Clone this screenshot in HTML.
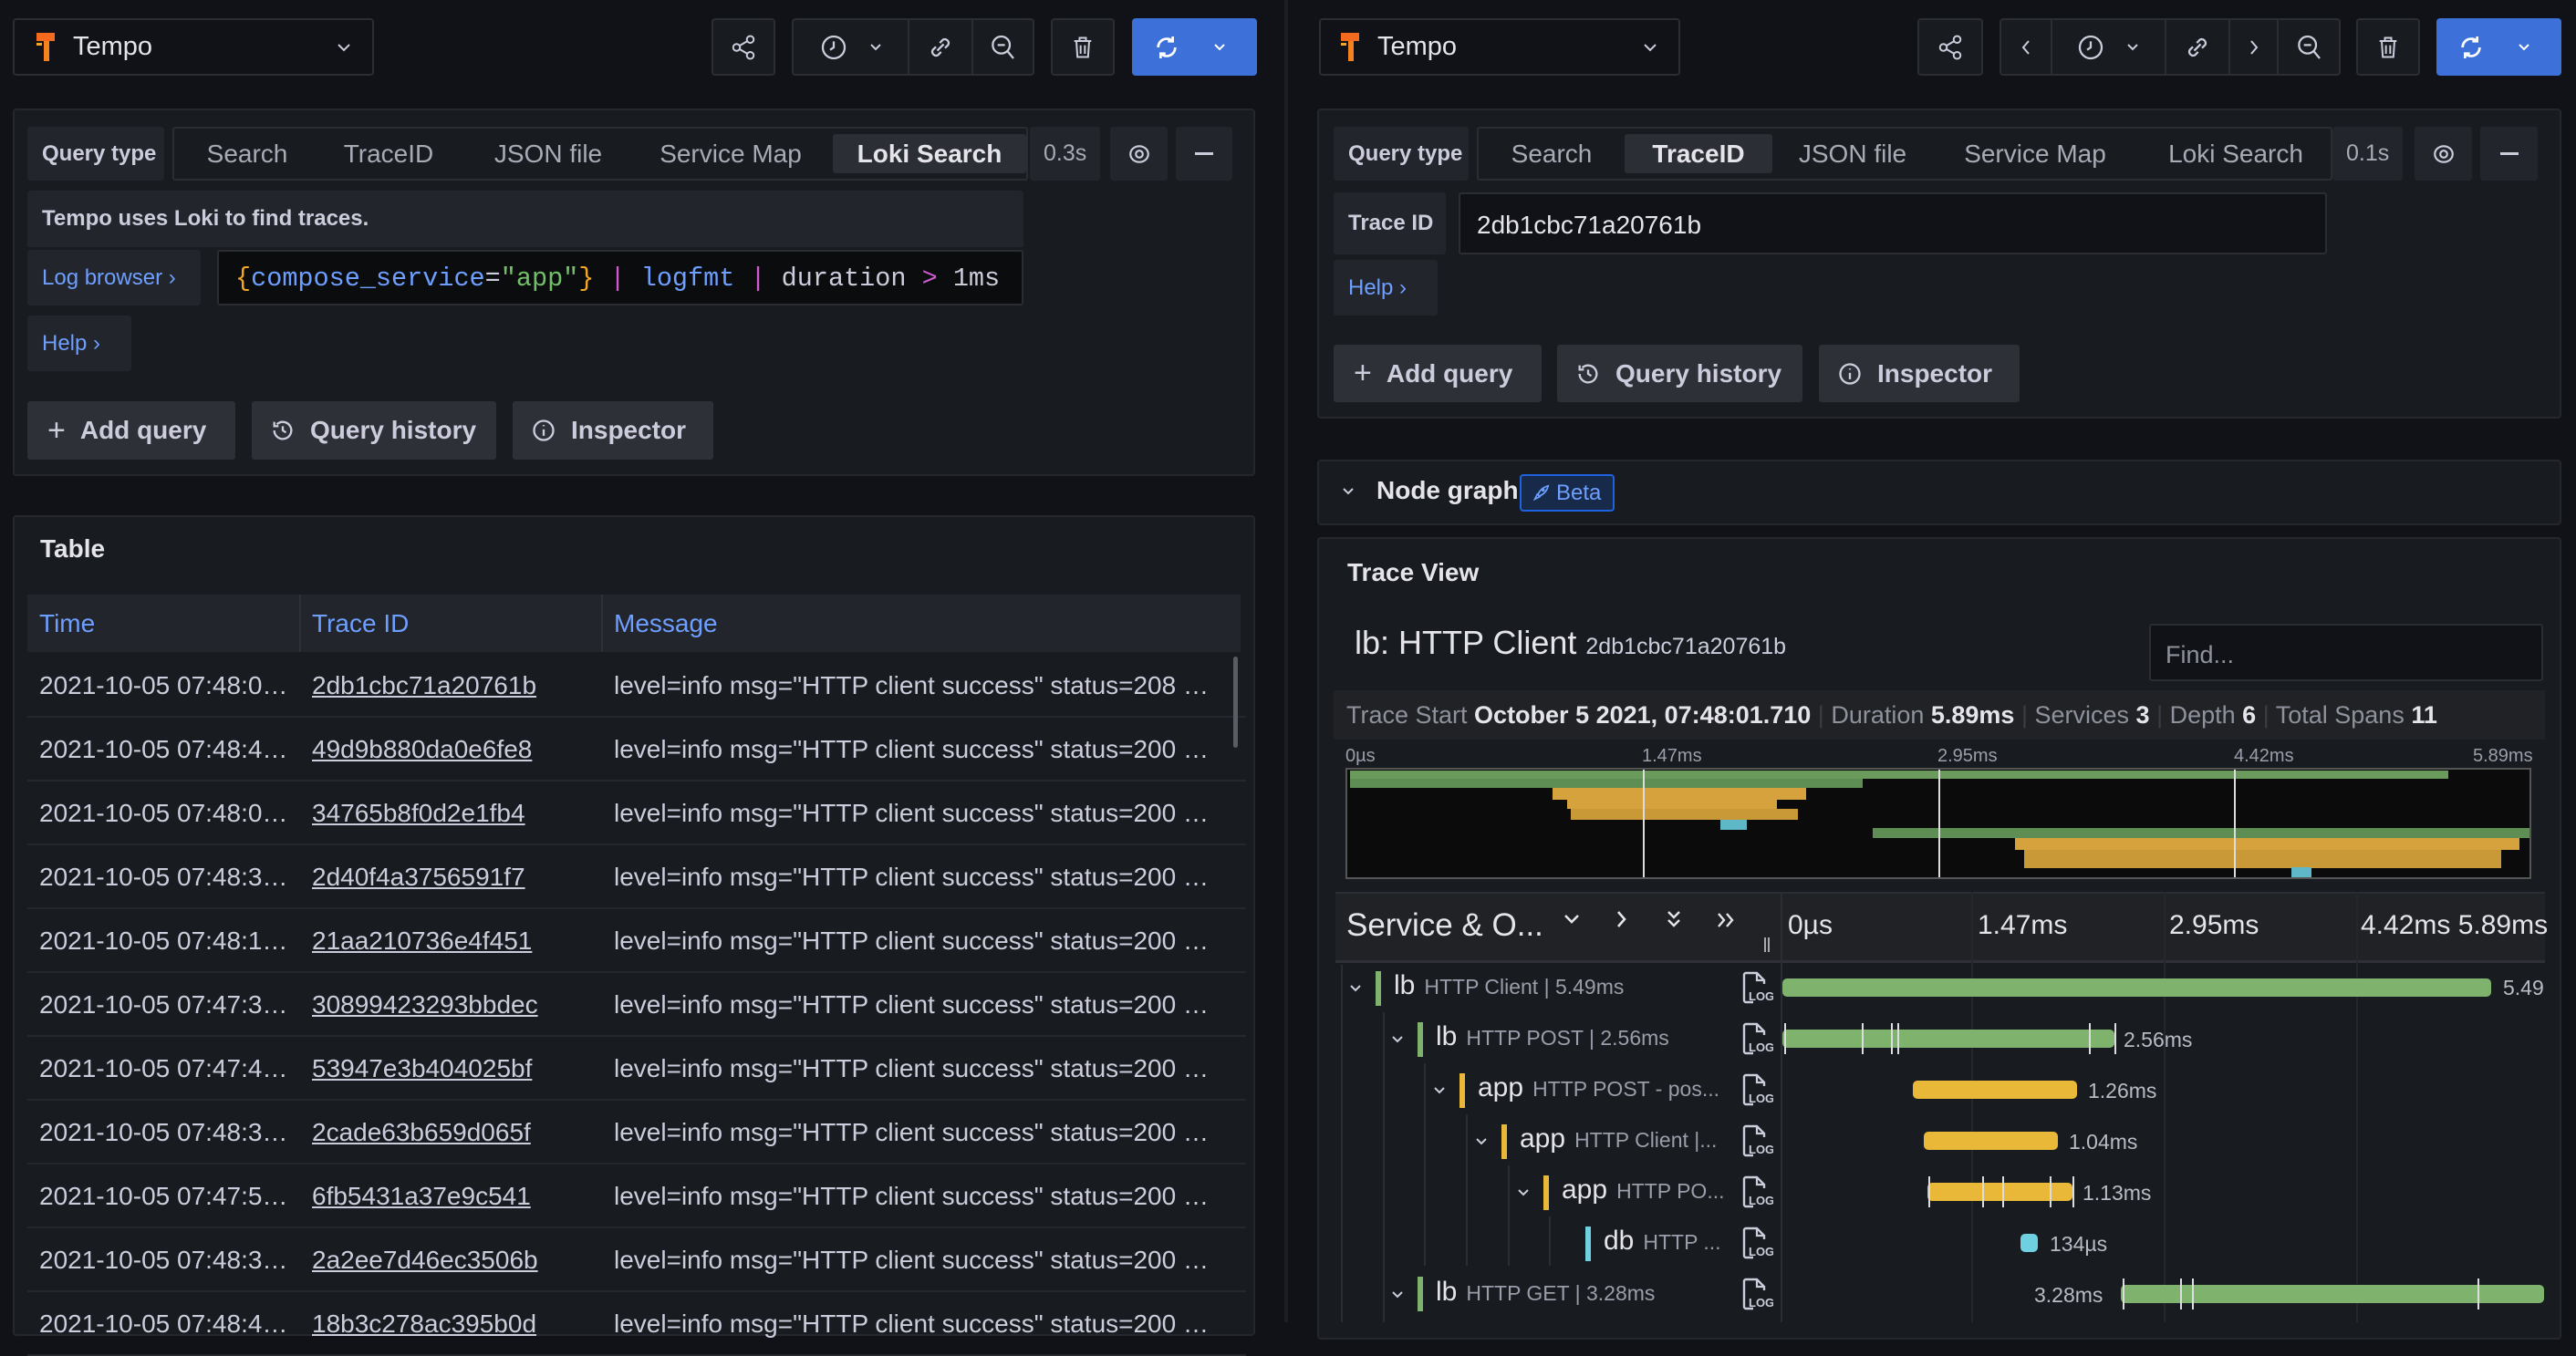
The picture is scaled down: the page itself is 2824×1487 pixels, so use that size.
<!DOCTYPE html>
<html><head><meta charset="utf-8"><style>
*{box-sizing:border-box;margin:0;padding:0}
body{width:2824px;height:1450px;background:#111217;font-family:"Liberation Sans",sans-serif;color:#ccccdc;position:relative;overflow:hidden}
.a{position:absolute}
.panel{position:absolute;background:#181b1f;border:2px solid #24272d;border-radius:4px}
.btn{position:absolute;background:#181b1f;border:2px solid #2a2d33;border-radius:4px;display:flex;align-items:center;justify-content:center}
.g{position:absolute;background:#22252b;border-radius:3px;display:flex;align-items:center;padding-left:16px;font-weight:bold;font-size:24px;color:#ccccdc}
.gb{position:absolute;background:#2d3036;border-radius:3px;display:flex;align-items:center;font-size:28px;font-weight:bold;color:#ccccdc}
.tab{position:absolute;font-size:28px;color:#a8abb6;top:0;height:100%;display:flex;align-items:center;justify-content:center;white-space:nowrap}
.act{background:#2b2e34;color:#e4e4ea;border-radius:3px}
svg{display:block}
.row{position:absolute;left:16px;width:1336px;height:70px;border-bottom:2px solid #24272d;font-size:28px;color:#ccccdc}
.row span{position:absolute;top:19px;white-space:nowrap;overflow:hidden;text-overflow:ellipsis}
.c1{left:13px;width:290px}.c2{left:312px;text-decoration:underline;width:300px}.c3{left:643px;width:680px}
.sv{position:absolute;font-size:30px;color:#e4e4ea;white-space:nowrap}
.op{font-size:23px;color:#9a9eaa;margin-left:10px}
.bar{position:absolute;height:20px;border-radius:5px}
.bl{position:absolute;font-size:23px;color:#b8bcc6}
.log{position:absolute;left:1908px}
</style></head><body>

<div class="a" style="left:1408px;top:0;width:4px;height:1450px;background:#1c1e23"></div>

<!-- LEFT TOP BAR -->
<div class="btn" style="left:14px;top:20px;width:396px;height:63px;justify-content:flex-start;padding-left:22px;background:#111217">
<svg width="26" height="36" viewBox="0 0 26 36"><rect x="2" y="2" width="20" height="9" fill="#f46b20"/><rect x="10" y="11" width="6" height="22" fill="#f5821f"/><rect x="2" y="13" width="6" height="3" fill="#f5a623"/></svg>
<span style="font-size:29px;margin-left:16px;color:#e4e4ea">Tempo</span>
<svg style="position:absolute;right:22px" width="18" height="12" viewBox="0 0 18 12"><path d="M3 3l6 6 6-6" stroke="#ccccdc" stroke-width="2" fill="none"/></svg></div>

<div class="btn" style="left:780px;top:20px;width:70px;height:63px"><svg width="30" height="30" viewBox="0 0 24 24" fill="none" stroke="#ccccdc" stroke-width="1.6"><circle cx="18" cy="5" r="3"/><circle cx="6" cy="12" r="3"/><circle cx="18" cy="19" r="3"/><path d="M8.6 10.5l6.8-4M8.6 13.5l6.8 4"/></svg></div>
<div class="btn" style="left:868px;top:20px;width:266px;height:63px;justify-content:flex-start">
<div style="width:126px;display:flex;align-items:center;justify-content:center;gap:22px"><svg width="32" height="32" viewBox="0 0 24 24" fill="none" stroke="#ccccdc" stroke-width="1.7"><circle cx="12" cy="12" r="9"/><path d="M12 7v5l-3 2"/></svg><svg width="16" height="10" viewBox="0 0 16 10"><path d="M3 2l5 5 5-5" stroke="#ccccdc" stroke-width="2" fill="none"/></svg></div>
<div style="width:70px;height:100%;border-left:2px solid #2a2d33;display:flex;align-items:center;justify-content:center"><svg width="34" height="34" viewBox="0 0 24 24" fill="none" stroke="#ccccdc" stroke-width="1.6"><path d="M9.5 14.5l5-5M8.5 11.5l-2.5 2.5a3 3 0 004 4l2.5-2.5M15.5 12.5l2.5-2.5a3 3 0 00-4-4l-2.5 2.5"/></svg></div>
<div style="width:68px;height:100%;border-left:2px solid #2a2d33;display:flex;align-items:center;justify-content:center"><svg width="32" height="32" viewBox="0 0 24 24" fill="none" stroke="#ccccdc" stroke-width="1.7"><circle cx="11" cy="10" r="7"/><path d="M8 10h6M16 15l5 6"/></svg></div></div>
<div class="btn" style="left:1152px;top:20px;width:70px;height:63px"><svg width="28" height="30" viewBox="0 0 24 24" fill="none" stroke="#ccccdc" stroke-width="1.7"><path d="M4 6h16M9 6V3h6v3M6 6l1 15h10l1-15M10 10v8M14 10v8"/></svg></div>
<div class="a" style="left:1241px;top:20px;width:137px;height:63px;background:#3d71d9;border-radius:4px;display:flex;align-items:center"><svg style="margin-left:22px" width="32" height="32" viewBox="0 0 24 24" fill="none" stroke="#fff" stroke-width="2"><path d="M19 12a7 7 0 01-12 5M5 12a7 7 0 0112-5M17 3v4h-4M7 21v-4h4"/></svg><svg style="margin-left:34px" width="16" height="10" viewBox="0 0 16 10"><path d="M3 2l5 5 5-5" stroke="#fff" stroke-width="2" fill="none"/></svg></div>

<!-- LEFT QUERY PANEL -->
<div class="panel" style="left:14px;top:119px;width:1362px;height:403px"></div>
<div class="g" style="left:30px;top:139px;width:150px;height:59px">Query type</div>
<div class="a" style="left:189px;top:139px;width:938px;height:59px;border:2px solid #2a2d33;border-radius:3px">
<div class="tab" style="left:30px;width:100px">Search</div>
<div class="tab" style="left:185px;width:100px">TraceID</div>
<div class="tab" style="left:350px;width:120px">JSON file</div>
<div class="tab" style="left:525px;width:170px">Service Map</div>
<div class="tab act" style="left:722px;width:212px;top:6px;height:43px;font-weight:bold">Loki Search</div></div>
<div class="g" style="left:1129px;top:139px;width:77px;height:59px;font-weight:normal;color:#a8abb6;font-size:25px;padding-left:15px">0.3s</div>
<div class="g" style="left:1217px;top:139px;width:63px;height:59px;padding:0;justify-content:center"><svg width="26" height="26" viewBox="0 0 24 24" fill="none" stroke="#ccccdc" stroke-width="2"><ellipse cx="12" cy="12" rx="9" ry="8"/><circle cx="12" cy="12" r="3.5"/></svg></div>
<div class="g" style="left:1289px;top:139px;width:62px;height:59px;padding:0;justify-content:center"><div style="width:20px;height:3px;background:#ccccdc"></div></div>
<div class="g" style="left:30px;top:209px;width:1092px;height:62px;font-size:24px;border-radius:4px 4px 0 0">Tempo uses Loki to find traces.</div>
<div class="g" style="left:30px;top:274px;width:190px;height:61px;color:#6e9fff;font-weight:normal;font-size:24px">Log browser ›</div>
<div class="a" style="left:238px;top:274px;width:884px;height:61px;background:#0b0c0e;border:2px solid #2a2d33;border-radius:3px;font-family:'Liberation Mono',monospace;font-size:28.5px;padding:13px 18px;white-space:pre"><span style="color:#f5a623">{</span><span style="color:#6e9fff">compose_service</span><span style="color:#ccccdc">=</span><span style="color:#73bf69">"app"</span><span style="color:#f5a623">}</span> <span style="color:#d05bd0">|</span> <span style="color:#6e9fff">logfmt</span> <span style="color:#d05bd0">|</span> <span style="color:#ccccdc">duration</span> <span style="color:#d05bd0">&gt;</span> <span style="color:#ccccdc">1ms</span></div>
<div class="g" style="left:30px;top:346px;width:114px;height:61px;color:#6e9fff;font-weight:normal">Help ›</div>
<div class="gb" style="left:30px;top:440px;width:228px;height:64px;padding-left:22px"><span style="font-weight:normal;font-size:34px;margin-right:16px">+</span>Add query</div>
<div class="gb" style="left:276px;top:440px;width:268px;height:64px;padding-left:20px"><svg width="28" height="28" viewBox="0 0 24 24" fill="none" stroke="#ccccdc" stroke-width="2" style="margin-right:16px"><path d="M4 12a8 8 0 102.5-5.8M4 4v4h4M12 8v4l3 2"/></svg>Query history</div>
<div class="gb" style="left:562px;top:440px;width:220px;height:64px;padding-left:20px"><svg width="28" height="28" viewBox="0 0 24 24" fill="none" stroke="#ccccdc" stroke-width="2" style="margin-right:16px"><circle cx="12" cy="12" r="9"/><path d="M12 11v6M12 7v1"/></svg>Inspector</div>

<!-- TABLE PANEL -->
<div class="panel" style="left:14px;top:565px;width:1362px;height:900px"></div>
<div class="a" style="left:44px;top:586px;font-size:28px;font-weight:bold;color:#e4e4ea">Table</div>
<div class="a" style="left:30px;top:652px;width:1330px;height:63px;background:#22252b;font-size:28px;color:#6e9fff">
<span class="a" style="left:13px;top:16px">Time</span><span class="a" style="left:312px;top:16px">Trace ID</span><span class="a" style="left:643px;top:16px">Message</span>
<div class="a" style="left:298px;top:0;width:2px;height:63px;background:#2e3138"></div><div class="a" style="left:629px;top:0;width:2px;height:63px;background:#2e3138"></div></div>
<div class="a" style="left:30px;top:715px;width:1330px;height:740px">
<div class="row" style="top:2px;left:0"><span class="c1">2021-10-05 07:48:0…</span><span class="c2">2db1cbc71a20761b</span><span class="c3">level=info msg="HTTP client success" status=208 …</span></div>
<div class="row" style="top:72px;left:0"><span class="c1">2021-10-05 07:48:4…</span><span class="c2">49d9b880da0e6fe8</span><span class="c3">level=info msg="HTTP client success" status=200 …</span></div>
<div class="row" style="top:142px;left:0"><span class="c1">2021-10-05 07:48:0…</span><span class="c2">34765b8f0d2e1fb4</span><span class="c3">level=info msg="HTTP client success" status=200 …</span></div>
<div class="row" style="top:212px;left:0"><span class="c1">2021-10-05 07:48:3…</span><span class="c2">2d40f4a3756591f7</span><span class="c3">level=info msg="HTTP client success" status=200 …</span></div>
<div class="row" style="top:282px;left:0"><span class="c1">2021-10-05 07:48:1…</span><span class="c2">21aa210736e4f451</span><span class="c3">level=info msg="HTTP client success" status=200 …</span></div>
<div class="row" style="top:352px;left:0"><span class="c1">2021-10-05 07:47:3…</span><span class="c2">30899423293bbdec</span><span class="c3">level=info msg="HTTP client success" status=200 …</span></div>
<div class="row" style="top:422px;left:0"><span class="c1">2021-10-05 07:47:4…</span><span class="c2">53947e3b404025bf</span><span class="c3">level=info msg="HTTP client success" status=200 …</span></div>
<div class="row" style="top:492px;left:0"><span class="c1">2021-10-05 07:48:3…</span><span class="c2">2cade63b659d065f</span><span class="c3">level=info msg="HTTP client success" status=200 …</span></div>
<div class="row" style="top:562px;left:0"><span class="c1">2021-10-05 07:47:5…</span><span class="c2">6fb5431a37e9c541</span><span class="c3">level=info msg="HTTP client success" status=200 …</span></div>
<div class="row" style="top:632px;left:0"><span class="c1">2021-10-05 07:48:3…</span><span class="c2">2a2ee7d46ec3506b</span><span class="c3">level=info msg="HTTP client success" status=200 …</span></div>
<div class="row" style="top:702px;left:0"><span class="c1">2021-10-05 07:48:4…</span><span class="c2">18b3c278ac395b0d</span><span class="c3">level=info msg="HTTP client success" status=200 …</span></div>
</div>
<div class="a" style="left:1352px;top:720px;width:5px;height:100px;background:#5a5d63;border-radius:3px"></div>

<!-- RIGHT TOP BAR -->
<div class="btn" style="left:1446px;top:20px;width:396px;height:63px;justify-content:flex-start;padding-left:20px;background:#111217">
<svg width="26" height="36" viewBox="0 0 26 36"><rect x="2" y="2" width="20" height="9" fill="#f46b20"/><rect x="10" y="11" width="6" height="22" fill="#f5821f"/><rect x="2" y="13" width="6" height="3" fill="#f5a623"/></svg>
<span style="font-size:29px;margin-left:16px;color:#e4e4ea">Tempo</span>
<svg style="position:absolute;right:22px" width="18" height="12" viewBox="0 0 18 12"><path d="M3 3l6 6 6-6" stroke="#ccccdc" stroke-width="2" fill="none"/></svg></div>
<div class="btn" style="left:2102px;top:20px;width:72px;height:63px"><svg width="30" height="30" viewBox="0 0 24 24" fill="none" stroke="#ccccdc" stroke-width="1.6"><circle cx="18" cy="5" r="3"/><circle cx="6" cy="12" r="3"/><circle cx="18" cy="19" r="3"/><path d="M8.6 10.5l6.8-4M8.6 13.5l6.8 4"/></svg></div>
<div class="btn" style="left:2192px;top:20px;width:374px;height:63px;justify-content:flex-start">
<div style="width:54px;display:flex;justify-content:center"><svg width="12" height="20" viewBox="0 0 12 20"><path d="M9 3l-6 7 6 7" stroke="#ccccdc" stroke-width="2" fill="none"/></svg></div>
<div style="width:126px;height:100%;border-left:2px solid #2a2d33;display:flex;align-items:center;justify-content:center;gap:22px"><svg width="32" height="32" viewBox="0 0 24 24" fill="none" stroke="#ccccdc" stroke-width="1.7"><circle cx="12" cy="12" r="9"/><path d="M12 7v5l-3 2"/></svg><svg width="16" height="10" viewBox="0 0 16 10"><path d="M3 2l5 5 5-5" stroke="#ccccdc" stroke-width="2" fill="none"/></svg></div>
<div style="width:70px;height:100%;border-left:2px solid #2a2d33;display:flex;align-items:center;justify-content:center"><svg width="34" height="34" viewBox="0 0 24 24" fill="none" stroke="#ccccdc" stroke-width="1.6"><path d="M9.5 14.5l5-5M8.5 11.5l-2.5 2.5a3 3 0 004 4l2.5-2.5M15.5 12.5l2.5-2.5a3 3 0 00-4-4l-2.5 2.5"/></svg></div>
<div style="width:54px;height:100%;border-left:2px solid #2a2d33;display:flex;align-items:center;justify-content:center"><svg width="12" height="20" viewBox="0 0 12 20"><path d="M3 3l6 7-6 7" stroke="#ccccdc" stroke-width="2" fill="none"/></svg></div>
<div style="width:68px;height:100%;border-left:2px solid #2a2d33;display:flex;align-items:center;justify-content:center"><svg width="32" height="32" viewBox="0 0 24 24" fill="none" stroke="#ccccdc" stroke-width="1.7"><circle cx="11" cy="10" r="7"/><path d="M8 10h6M16 15l5 6"/></svg></div></div>
<div class="btn" style="left:2583px;top:20px;width:70px;height:63px"><svg width="28" height="30" viewBox="0 0 24 24" fill="none" stroke="#ccccdc" stroke-width="1.7"><path d="M4 6h16M9 6V3h6v3M6 6l1 15h10l1-15M10 10v8M14 10v8"/></svg></div>
<div class="a" style="left:2671px;top:20px;width:137px;height:63px;background:#3d71d9;border-radius:4px;display:flex;align-items:center"><svg style="margin-left:22px" width="32" height="32" viewBox="0 0 24 24" fill="none" stroke="#fff" stroke-width="2"><path d="M19 12a7 7 0 01-12 5M5 12a7 7 0 0112-5M17 3v4h-4M7 21v-4h4"/></svg><svg style="margin-left:34px" width="16" height="10" viewBox="0 0 16 10"><path d="M3 2l5 5 5-5" stroke="#fff" stroke-width="2" fill="none"/></svg></div>

<!-- RIGHT QUERY PANEL -->
<div class="panel" style="left:1444px;top:119px;width:1364px;height:340px"></div>
<div class="g" style="left:1462px;top:139px;width:148px;height:59px">Query type</div>
<div class="a" style="left:1619px;top:139px;width:938px;height:59px;border:2px solid #2a2d33;border-radius:3px">
<div class="tab" style="left:30px;width:100px">Search</div>
<div class="tab act" style="left:160px;width:162px;top:6px;height:43px;font-weight:bold">TraceID</div>
<div class="tab" style="left:350px;width:120px">JSON file</div>
<div class="tab" style="left:525px;width:170px">Service Map</div>
<div class="tab" style="left:740px;width:180px">Loki Search</div></div>
<div class="g" style="left:2557px;top:139px;width:77px;height:59px;font-weight:normal;color:#a8abb6;font-size:25px;padding-left:15px">0.1s</div>
<div class="g" style="left:2647px;top:139px;width:63px;height:59px;padding:0;justify-content:center"><svg width="26" height="26" viewBox="0 0 24 24" fill="none" stroke="#ccccdc" stroke-width="2"><ellipse cx="12" cy="12" rx="9" ry="8"/><circle cx="12" cy="12" r="3.5"/></svg></div>
<div class="g" style="left:2719px;top:139px;width:63px;height:59px;padding:0;justify-content:center"><div style="width:20px;height:3px;background:#ccccdc"></div></div>
<div class="g" style="left:1462px;top:211px;width:123px;height:68px">Trace ID</div>
<div class="a" style="left:1599px;top:211px;width:952px;height:68px;background:#111217;border:2px solid #2a2d33;border-radius:3px;font-size:28px;padding:18px 18px;color:#e4e4ea">2db1cbc71a20761b</div>
<div class="g" style="left:1462px;top:285px;width:114px;height:61px;color:#6e9fff;font-weight:normal">Help ›</div>
<div class="gb" style="left:1462px;top:378px;width:228px;height:63px;padding-left:22px"><span style="font-weight:normal;font-size:34px;margin-right:16px">+</span>Add query</div>
<div class="gb" style="left:1707px;top:378px;width:269px;height:63px;padding-left:20px"><svg width="28" height="28" viewBox="0 0 24 24" fill="none" stroke="#ccccdc" stroke-width="2" style="margin-right:16px"><path d="M4 12a8 8 0 102.5-5.8M4 4v4h4M12 8v4l3 2"/></svg>Query history</div>
<div class="gb" style="left:1994px;top:378px;width:220px;height:63px;padding-left:20px"><svg width="28" height="28" viewBox="0 0 24 24" fill="none" stroke="#ccccdc" stroke-width="2" style="margin-right:16px"><circle cx="12" cy="12" r="9"/><path d="M12 11v6M12 7v1"/></svg>Inspector</div>

<!-- NODE GRAPH -->
<div class="panel" style="left:1444px;top:504px;width:1364px;height:72px"></div>
<svg class="a" style="left:1470px;top:534px" width="16" height="10" viewBox="0 0 16 10"><path d="M3 2l5 5 5-5" stroke="#ccccdc" stroke-width="2" fill="none"/></svg>
<div class="a" style="left:1509px;top:522px;font-size:28px;font-weight:bold;color:#e4e4ea">Node graph</div>
<div class="a" style="left:1666px;top:520px;width:104px;height:41px;border:2px solid #1f62e0;background:#172a4a;border-radius:4px;color:#6e9fff;font-size:24px;display:flex;align-items:center;padding-left:10px"><svg width="22" height="22" viewBox="0 0 24 24" fill="none" stroke="#6e9fff" stroke-width="1.8" style="margin-right:6px"><path d="M5 19l3-6 3 3-6 3zM9 13c3-7 8-9 12-10-1 4-3 9-10 12M14 8a1 1 0 102 0 1 1 0 10-2 0"/></svg>Beta</div>

<!-- TRACE VIEW -->
<div class="panel" style="left:1444px;top:589px;width:1364px;height:880px"></div>
<div class="a" style="left:1477px;top:612px;font-size:28px;font-weight:bold;color:#e4e4ea">Trace View</div>
<div class="a" style="left:1485px;top:684px;font-size:36px;color:#e4e4ea;white-space:nowrap">lb: HTTP Client <span style="font-size:25px;color:#ccccdc">2db1cbc71a20761b</span></div>
<div class="a" style="left:2356px;top:684px;width:432px;height:63px;background:#111217;border:2px solid #2a2d33;border-radius:3px;font-size:27px;color:#8e929c;padding:17px 16px">Find...</div>
<div class="a" style="left:1462px;top:757px;width:1328px;height:54px;background:#202226;font-size:27px;color:#8e929c;white-space:nowrap;padding:12px 14px">Trace Start <b style="color:#e4e4ea">October 5 2021, 07:48:01.710</b> <span style="color:#3a3d43">|</span> Duration <b style="color:#e4e4ea">5.89ms</b> <span style="color:#3a3d43">|</span> Services <b style="color:#e4e4ea">3</b> <span style="color:#3a3d43">|</span> Depth <b style="color:#e4e4ea">6</b> <span style="color:#3a3d43">|</span> Total Spans <b style="color:#e4e4ea">11</b></div>

<!-- minimap -->
<div class="a" style="left:1475px;top:818px;width:1300px;font-size:20px;color:#9a9eaa">
<span class="a" style="left:0">0µs</span><span class="a" style="left:325px">1.47ms</span><span class="a" style="left:649px">2.95ms</span><span class="a" style="left:974px">4.42ms</span><span class="a" style="left:1236px">5.89ms</span></div>
<div class="a" style="left:1475px;top:842px;width:1300px;height:122px;background:#0b0b0c;border:2px solid #555"></div>
<div class="a" style="left:1480px;top:845px;width:1204px;height:9px;background:#6a9a5c"></div>
<div class="a" style="left:1480px;top:854px;width:562px;height:10px;background:#5f8e55"></div>
<div class="a" style="left:1702px;top:864px;width:278px;height:13px;background:#d5a23d"></div>
<div class="a" style="left:1718px;top:877px;width:230px;height:10px;background:#d5a23d"></div>
<div class="a" style="left:1722px;top:887px;width:249px;height:12px;background:#c99937"></div>
<div class="a" style="left:1886px;top:899px;width:29px;height:11px;background:#5fb8c8"></div>
<div class="a" style="left:2053px;top:908px;width:720px;height:11px;background:#5f8e55"></div>
<div class="a" style="left:2209px;top:919px;width:553px;height:13px;background:#d5a23d"></div>
<div class="a" style="left:2219px;top:932px;width:523px;height:20px;background:#c99937"></div>
<div class="a" style="left:2512px;top:951px;width:22px;height:11px;background:#5fb8c8"></div>
<div class="a" style="left:1801px;top:844px;width:2px;height:118px;background:#ddd"></div>
<div class="a" style="left:2125px;top:844px;width:2px;height:118px;background:#ddd"></div>
<div class="a" style="left:2449px;top:844px;width:2px;height:118px;background:#ddd"></div>

<!-- gantt header -->
<div class="a" style="left:1464px;top:978px;width:1326px;height:78px;background:#202226;border-top:2px solid #2a2d33;border-bottom:3px solid #2e3138"></div>
<div class="a" style="left:1476px;top:995px;font-size:35px;color:#e4e4ea;white-space:nowrap">Service &amp; O...</div>
<svg class="a" style="left:1712px;top:1000px" width="22" height="16" viewBox="0 0 22 16"><path d="M4 4l7 7 7-7" stroke="#e4e4ea" stroke-width="2.6" fill="none"/></svg>
<svg class="a" style="left:1770px;top:996px" width="16" height="24" viewBox="0 0 16 24"><path d="M4 4l7 8-7 8" stroke="#e4e4ea" stroke-width="2.6" fill="none"/></svg>
<svg class="a" style="left:1825px;top:996px" width="20" height="26" viewBox="0 0 20 26"><path d="M4 4l6 6 6-6M4 13l6 6 6-6" stroke="#e4e4ea" stroke-width="2.4" fill="none"/></svg>
<svg class="a" style="left:1880px;top:998px" width="26" height="22" viewBox="0 0 26 22"><path d="M4 4l6 7-6 7M13 4l6 7-6 7" stroke="#e4e4ea" stroke-width="2.4" fill="none"/></svg>
<div class="a" style="left:1934px;top:1028px;width:6px;height:16px;border-left:2px solid #aaa;border-right:2px solid #aaa"></div>
<div class="a" style="left:1952px;top:978px;width:2px;height:472px;background:#2a2d33"></div>
<div class="a" style="left:2161px;top:978px;width:2px;height:472px;background:#24272c"></div>
<div class="a" style="left:2372px;top:978px;width:2px;height:472px;background:#24272c"></div>
<div class="a" style="left:2583px;top:978px;width:2px;height:472px;background:#24272c"></div>
<div class="a" style="left:1960px;top:998px;font-size:30px;color:#e4e4ea">0µs</div>
<div class="a" style="left:2168px;top:998px;font-size:30px;color:#e4e4ea">1.47ms</div>
<div class="a" style="left:2378px;top:998px;font-size:30px;color:#e4e4ea">2.95ms</div>
<div class="a" style="left:2588px;top:998px;font-size:30px;color:#e4e4ea;white-space:nowrap">4.42ms 5.89ms</div>

<!-- tree guide lines -->
<div class="a" style="left:1470px;top:1058px;width:2px;height:392px;background:#2a2d33"></div>
<div class="a" style="left:1516px;top:1110px;width:2px;height:340px;background:#2a2d33"></div>
<div class="a" style="left:1561px;top:1166px;width:2px;height:222px;background:#2a2d33"></div>
<div class="a" style="left:1607px;top:1222px;width:2px;height:166px;background:#2a2d33"></div>
<div class="a" style="left:1653px;top:1278px;width:2px;height:110px;background:#2a2d33"></div>
<div class="a" style="left:1698px;top:1334px;width:2px;height:54px;background:#2a2d33"></div>

<!-- span rows -->
<svg class="a" style="left:1478px;top:1078px" width="16" height="12" viewBox="0 0 16 12"><path d="M3 3l5 5 5-5" stroke="#ccccdc" stroke-width="2" fill="none"/></svg>
<div class="a" style="left:1508px;top:1065px;width:6px;height:38px;background:#7eb26d"></div>
<div class="sv" style="left:1528px;top:1064px">lb<span class="op">HTTP Client | 5.49ms</span></div>
<svg class="a" style="left:1524px;top:1134px" width="16" height="12" viewBox="0 0 16 12"><path d="M3 3l5 5 5-5" stroke="#ccccdc" stroke-width="2" fill="none"/></svg>
<div class="a" style="left:1554px;top:1121px;width:6px;height:38px;background:#7eb26d"></div>
<div class="sv" style="left:1574px;top:1120px">lb<span class="op">HTTP POST | 2.56ms</span></div>
<svg class="a" style="left:1570px;top:1190px" width="16" height="12" viewBox="0 0 16 12"><path d="M3 3l5 5 5-5" stroke="#ccccdc" stroke-width="2" fill="none"/></svg>
<div class="a" style="left:1600px;top:1177px;width:6px;height:38px;background:#eab839"></div>
<div class="sv" style="left:1620px;top:1176px">app<span class="op">HTTP POST - pos...</span></div>
<svg class="a" style="left:1616px;top:1246px" width="16" height="12" viewBox="0 0 16 12"><path d="M3 3l5 5 5-5" stroke="#ccccdc" stroke-width="2" fill="none"/></svg>
<div class="a" style="left:1646px;top:1233px;width:6px;height:38px;background:#eab839"></div>
<div class="sv" style="left:1666px;top:1232px">app<span class="op">HTTP Client |...</span></div>
<svg class="a" style="left:1662px;top:1302px" width="16" height="12" viewBox="0 0 16 12"><path d="M3 3l5 5 5-5" stroke="#ccccdc" stroke-width="2" fill="none"/></svg>
<div class="a" style="left:1692px;top:1289px;width:6px;height:38px;background:#eab839"></div>
<div class="sv" style="left:1712px;top:1288px">app<span class="op">HTTP PO...</span></div>
<div class="a" style="left:1738px;top:1345px;width:6px;height:38px;background:#6ed0e0"></div>
<div class="sv" style="left:1758px;top:1344px">db<span class="op">HTTP ...</span></div>
<svg class="a" style="left:1524px;top:1414px" width="16" height="12" viewBox="0 0 16 12"><path d="M3 3l5 5 5-5" stroke="#ccccdc" stroke-width="2" fill="none"/></svg>
<div class="a" style="left:1554px;top:1400px;width:6px;height:38px;background:#7eb26d"></div>
<div class="sv" style="left:1574px;top:1400px">lb<span class="op">HTTP GET | 3.28ms</span></div>

<!-- log icons -->
<svg class="log" style="top:1064px" width="36" height="40" viewBox="0 0 36 40"><path d="M14 35H6a2 2 0 01-2-2V5a2 2 0 012-2h12l8 8v4" fill="none" stroke="#ccccdc" stroke-width="2.4"/><path d="M18 3v8h8" fill="none" stroke="#ccccdc" stroke-width="2.2"/><text x="9" y="33" font-family="Liberation Sans" font-weight="bold" font-size="13" fill="#ccccdc">LOG</text></svg>
<svg class="log" style="top:1120px" width="36" height="40" viewBox="0 0 36 40"><path d="M14 35H6a2 2 0 01-2-2V5a2 2 0 012-2h12l8 8v4" fill="none" stroke="#ccccdc" stroke-width="2.4"/><path d="M18 3v8h8" fill="none" stroke="#ccccdc" stroke-width="2.2"/><text x="9" y="33" font-family="Liberation Sans" font-weight="bold" font-size="13" fill="#ccccdc">LOG</text></svg>
<svg class="log" style="top:1176px" width="36" height="40" viewBox="0 0 36 40"><path d="M14 35H6a2 2 0 01-2-2V5a2 2 0 012-2h12l8 8v4" fill="none" stroke="#ccccdc" stroke-width="2.4"/><path d="M18 3v8h8" fill="none" stroke="#ccccdc" stroke-width="2.2"/><text x="9" y="33" font-family="Liberation Sans" font-weight="bold" font-size="13" fill="#ccccdc">LOG</text></svg>
<svg class="log" style="top:1232px" width="36" height="40" viewBox="0 0 36 40"><path d="M14 35H6a2 2 0 01-2-2V5a2 2 0 012-2h12l8 8v4" fill="none" stroke="#ccccdc" stroke-width="2.4"/><path d="M18 3v8h8" fill="none" stroke="#ccccdc" stroke-width="2.2"/><text x="9" y="33" font-family="Liberation Sans" font-weight="bold" font-size="13" fill="#ccccdc">LOG</text></svg>
<svg class="log" style="top:1288px" width="36" height="40" viewBox="0 0 36 40"><path d="M14 35H6a2 2 0 01-2-2V5a2 2 0 012-2h12l8 8v4" fill="none" stroke="#ccccdc" stroke-width="2.4"/><path d="M18 3v8h8" fill="none" stroke="#ccccdc" stroke-width="2.2"/><text x="9" y="33" font-family="Liberation Sans" font-weight="bold" font-size="13" fill="#ccccdc">LOG</text></svg>
<svg class="log" style="top:1344px" width="36" height="40" viewBox="0 0 36 40"><path d="M14 35H6a2 2 0 01-2-2V5a2 2 0 012-2h12l8 8v4" fill="none" stroke="#ccccdc" stroke-width="2.4"/><path d="M18 3v8h8" fill="none" stroke="#ccccdc" stroke-width="2.2"/><text x="9" y="33" font-family="Liberation Sans" font-weight="bold" font-size="13" fill="#ccccdc">LOG</text></svg>
<svg class="log" style="top:1400px" width="36" height="40" viewBox="0 0 36 40"><path d="M14 35H6a2 2 0 01-2-2V5a2 2 0 012-2h12l8 8v4" fill="none" stroke="#ccccdc" stroke-width="2.4"/><path d="M18 3v8h8" fill="none" stroke="#ccccdc" stroke-width="2.2"/><text x="9" y="33" font-family="Liberation Sans" font-weight="bold" font-size="13" fill="#ccccdc">LOG</text></svg>

<!-- bars -->
<div class="bar" style="left:1954px;top:1073px;width:777px;background:#7eb26d"></div><div class="bl" style="left:2744px;top:1070px">5.49</div>
<div class="bar" style="left:1954px;top:1129px;width:364px;background:#7eb26d"></div><div class="bl" style="left:2328px;top:1127px">2.56ms</div>
<div class="bar" style="left:2097px;top:1185px;width:180px;background:#eab839"></div><div class="bl" style="left:2289px;top:1183px">1.26ms</div>
<div class="bar" style="left:2109px;top:1241px;width:147px;background:#eab839"></div><div class="bl" style="left:2268px;top:1239px">1.04ms</div>
<div class="bar" style="left:2113px;top:1297px;width:159px;background:#eab839"></div><div class="bl" style="left:2283px;top:1295px">1.13ms</div>
<div class="bar" style="left:2215px;top:1353px;width:19px;background:#6ed0e0"></div><div class="bl" style="left:2247px;top:1351px">134µs</div>
<div class="bar" style="left:2325px;top:1409px;width:464px;background:#7eb26d"></div><div class="bl" style="left:2230px;top:1407px">3.28ms</div>
<div class="a" style="left:1956px;top:1122px;width:2px;height:34px;background:#ddd"></div>
<div class="a" style="left:2041px;top:1122px;width:2px;height:34px;background:#ddd"></div>
<div class="a" style="left:2073px;top:1122px;width:2px;height:34px;background:#ddd"></div>
<div class="a" style="left:2080px;top:1122px;width:2px;height:34px;background:#ddd"></div>
<div class="a" style="left:2290px;top:1122px;width:2px;height:34px;background:#ddd"></div>
<div class="a" style="left:2318px;top:1122px;width:2px;height:34px;background:#ddd"></div>
<div class="a" style="left:2114px;top:1290px;width:2px;height:34px;background:#ddd"></div>
<div class="a" style="left:2173px;top:1290px;width:2px;height:34px;background:#ddd"></div>
<div class="a" style="left:2195px;top:1290px;width:2px;height:34px;background:#ddd"></div>
<div class="a" style="left:2247px;top:1290px;width:2px;height:34px;background:#ddd"></div>
<div class="a" style="left:2272px;top:1290px;width:2px;height:34px;background:#ddd"></div>
<div class="a" style="left:2327px;top:1402px;width:2px;height:34px;background:#ddd"></div>
<div class="a" style="left:2390px;top:1402px;width:2px;height:34px;background:#ddd"></div>
<div class="a" style="left:2403px;top:1402px;width:2px;height:34px;background:#ddd"></div>
<div class="a" style="left:2716px;top:1402px;width:2px;height:34px;background:#ddd"></div>
</body></html>
